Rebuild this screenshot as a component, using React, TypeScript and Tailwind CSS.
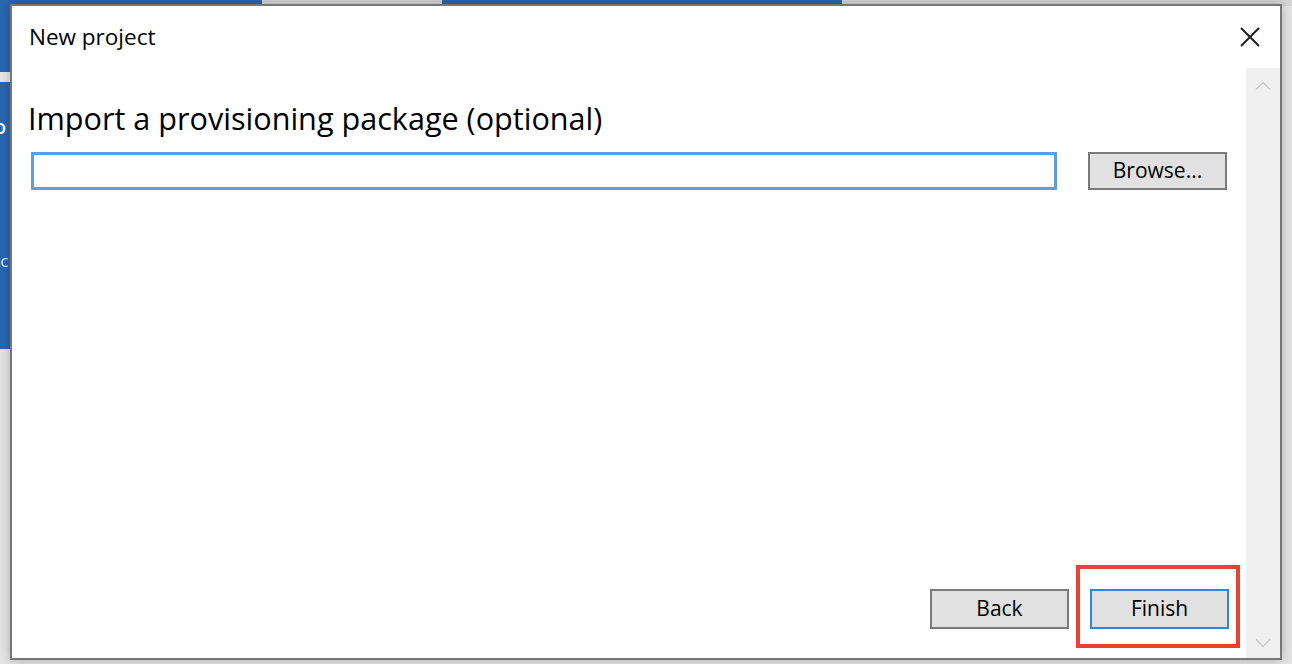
import React from 'react';

const Chevron: React.FC<{ down?: boolean }> = ({ down }) => (
  <svg width="16" height="10" viewBox="0 0 16 10" className="text-[#c9c9c9]">
    <path
      d={down ? 'M1 1.5 L8 8.5 L15 1.5' : 'M1 8.5 L8 1.5 L15 8.5'}
      fill="none"
      stroke="currentColor"
      strokeWidth="1.4"
    />
  </svg>
);

const App: React.FC = () => {
  return (
    <div className="relative h-[664px] w-[1292px] overflow-hidden bg-[#e4e4e4] font-['Open_Sans',sans-serif]">
      {/* app window behind the dialog */}
      <div className="flex h-[6px]">
        <div className="w-[262px] bg-[#2a66b1]"></div>
        <div className="w-[180px] bg-[#d6d6d6]"></div>
        <div className="w-[400px] bg-[#2a66b1]"></div>
        <div className="flex-1 bg-[#d6d6d6]"></div>
      </div>
      <div className="flex w-[12px] flex-col">
        <div className="h-[66px] bg-[#2a66b1]"></div>
        <div className="h-[10px] bg-[#e8e8e8]"></div>
        <div className="relative h-[267px] overflow-hidden bg-[#2a66b1]">
          <span className="absolute left-[-6px] top-[30px] text-[20px] font-semibold text-white">o</span>
          <span className="absolute left-[-10px] top-[166px] text-[17px] text-[#dbe6f4]">oc</span>
        </div>
      </div>

      {/* dialog window */}
      <div className="absolute left-[10px] top-[4px] flex h-[656px] w-[1272px] flex-col border-2 border-[#767676] bg-white shadow-[0_0_10px_rgba(0,0,0,0.25)]">
        <div className="flex h-[62px] items-center justify-between pl-[17px] pr-[19px]">
          <span className="text-[22.5px] text-black">New project</span>
          <svg width="22" height="22" viewBox="0 0 22 22">
            <path d="M2 2 L20 20 M20 2 L2 20" stroke="#1a1a1a" strokeWidth="1.8" />
          </svg>
        </div>
        <div className="flex flex-1">
          <div className="flex flex-1 flex-col pl-[19px] pr-[17px] pb-[29px]">
            <h1 className="-ml-[3px] mt-[31px] text-[30.6px] leading-[38px] text-black">
              Import a provisioning package (optional)
            </h1>
            <div className="mt-[15px] flex items-center gap-[31px] pr-[2px]">
              <input
                type="text"
                className="h-[38px] flex-1 border-[3px] border-[#5b9ee6] bg-white outline-none"
              />
              <button className="h-[38px] w-[139px] border-2 border-[#7a7a7a] bg-[#e1e1e1] text-[21px] text-black">
                Browse...
              </button>
            </div>
            <div className="mt-auto flex justify-end gap-[21px]">
              <button className="h-[40px] w-[139px] border-2 border-[#7a7a7a] bg-[#e1e1e1] text-[21px] text-black">
                Back
              </button>
              <div className="relative">
                <button className="h-[40px] w-[139px] border-2 border-[#2f86dd] bg-[#e1e1e1] text-[21px] text-black">
                  Finish
                </button>
                <div className="pointer-events-none absolute -bottom-[19px] -left-[14px] -right-[11px] -top-[24px] border-[4px] border-[#e8432e]"></div>
              </div>
            </div>
          </div>
          <div className="flex w-[34px] flex-col items-center justify-between bg-[#f0f0f0] pb-[10px] pt-[13px]">
            <Chevron />
            <Chevron down />
          </div>
        </div>
      </div>
    </div>
  );
};

export default App;
